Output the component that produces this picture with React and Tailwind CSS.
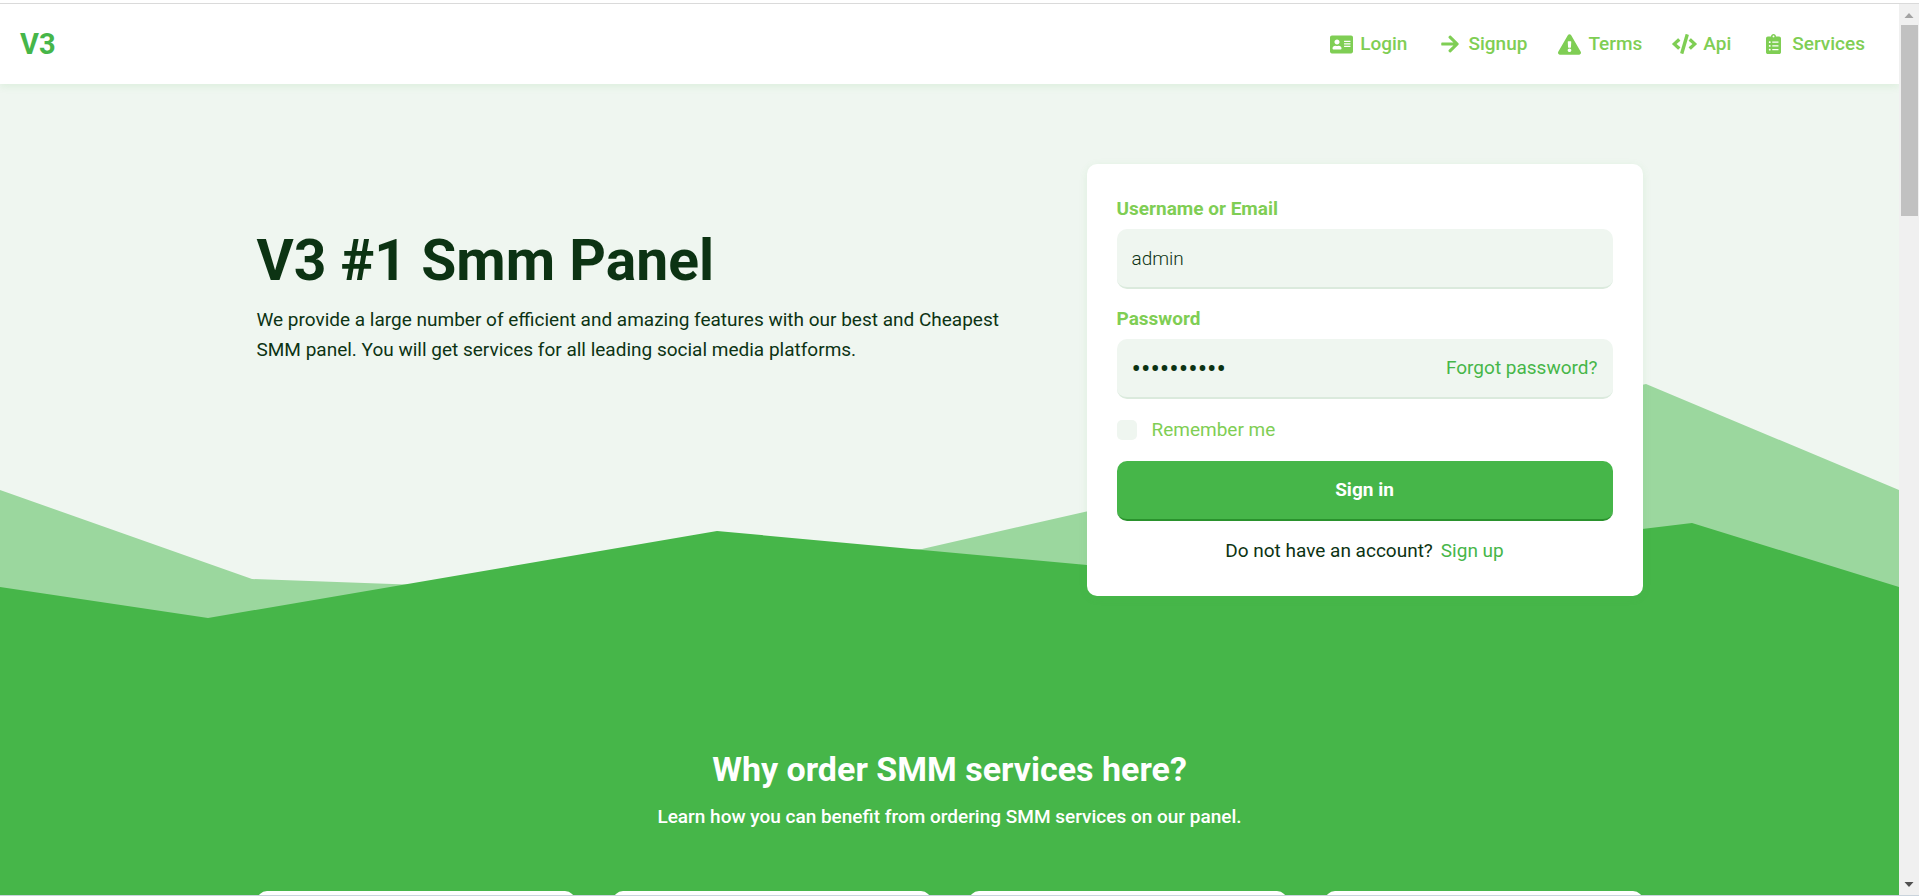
import React from 'react';
import {
  FaAddressCard,
  FaArrowRight,
  FaExclamationTriangle,
  FaCode,
  FaClipboardList,
} from 'react-icons/fa';

const links = [
  { label: 'Login', Icon: FaAddressCard, size: 'h-[21px] w-[23px]' },
  { label: 'Signup', Icon: FaArrowRight, size: 'h-5 w-[18px]' },
  { label: 'Terms', Icon: FaExclamationTriangle, size: 'h-[21px] w-[23px]' },
  { label: 'Api', Icon: FaCode, size: 'h-5 w-[25px]' },
  { label: 'Services', Icon: FaClipboardList, size: 'h-5 w-[15px]' },
];

function Header() {
  return (
    <header className="relative z-10 flex h-20 shrink-0 items-center justify-between bg-white pr-[34px] pl-5 shadow-[0_2px_8px_rgba(70,182,73,0.12)]">
      <a href="#home" className="text-[29px] leading-10 font-bold text-[#46b649]">
        V3
      </a>
      <nav className="flex items-center gap-[30px]">
        {links.map(({ label, Icon, size }) => (
          <a
            key={label}
            href={'#' + label.toLowerCase()}
            className="flex items-center gap-[6px] text-[19px] leading-[30px] font-medium text-[#7fce54]"
          >
            <span className="flex w-[25px] justify-center">
              <Icon className={size} aria-hidden="true" />
            </span>
            {label}
          </a>
        ))}
      </nav>
    </header>
  );
}

function Hills() {
  return (
    <svg
      className="absolute inset-0 h-full w-full"
      viewBox="0 0 1899 811"
      preserveAspectRatio="none"
      aria-hidden="true"
    >
      <path d="M0 406 252 495 406 500.500 922 465 1646 300 1899 406V811H0Z" fill="#9bd79e" />
      <path d="M0 503 208 534 717 447 1087 481 1350 480 1692 439 1899 503V811H0Z" fill="#46b649" />
    </svg>
  );
}

function LoginCard() {
  return (
    <form
      className="flex w-[556px] flex-col gap-[15px] rounded-[10px] bg-white p-[30px] shadow-[0_2px_8px_rgba(70,182,73,0.10)]"
      onSubmit={(e) => e.preventDefault()}
    >
      <div className="flex flex-col gap-[5px]">
        <label htmlFor="username" className="text-[19px] leading-[30px] font-bold text-[#7fce54]">
          Username or Email
        </label>
        <input
          id="username"
          type="text"
          defaultValue="admin"
          className="h-[60px] w-full rounded-[10px] border-b-2 border-[#dbeadd] bg-[#eff6f0] px-[15px] text-[19px] font-light text-[#0c3313] outline-none"
        />
      </div>
      <div className="flex flex-col gap-[5px]">
        <label htmlFor="password" className="text-[19px] leading-[30px] font-bold text-[#7fce54]">
          Password
        </label>
        <div className="flex h-[60px] items-center rounded-[10px] border-b-2 border-[#dbeadd] bg-[#eff6f0] px-[15px]">
          <input
            id="password"
            type="password"
            defaultValue="adminadmin"
            className="h-full min-w-0 flex-1 bg-transparent text-[28px] text-[#0c3313] outline-none"
          />
          <a href="#forgot" className="text-[19px] leading-[30px] text-[#46b649]">
            Forgot password?
          </a>
        </div>
      </div>
      <div className="flex items-center gap-[15px]">
        <input
          id="remember"
          type="checkbox"
          className="size-5 appearance-none rounded-[5px] bg-[#eff6f0] checked:bg-[#46b649]"
        />
        <label htmlFor="remember" className="text-[19px] leading-8 text-[#7fce54]">
          Remember me
        </label>
      </div>
      <button
        type="submit"
        className="h-[60px] rounded-[10px] border-b-2 border-[#2a922d] bg-[#46b649] text-[19px] font-bold text-white"
      >
        Sign in
      </button>
      <p className="flex justify-center gap-2 text-[19px] leading-[30px] text-[#0c3313]">
        Do not have an account?
        <a href="#signup" className="text-[#46b649]">
          Sign up
        </a>
      </p>
    </form>
  );
}

function Scrollbar() {
  return (
    <div className="flex w-5 shrink-0 flex-col items-center bg-[#f0f0f0]" aria-hidden="true">
      <svg className="h-[21px] w-5 shrink-0" viewBox="0 0 20 21">
        <path d="M5.500 14h9L10 9Z" fill="#a3a3a3" />
      </svg>
      <div className="h-[191px] w-[17px] shrink-0 bg-[#c1c1c1]" />
      <div className="flex-1" />
      <svg className="h-5 w-5 shrink-0" viewBox="0 0 20 20">
        <path d="M5.500 7h9L10 12Z" fill="#505050" />
      </svg>
    </div>
  );
}

export default function App() {
  return (
    <div className="flex h-screen flex-col overflow-hidden bg-white font-[Roboto,'Noto_Sans',sans-serif]">
      <div className="h-1 shrink-0 border-b border-[#dadada]" />
      <div className="flex min-h-0 flex-1">
        <div className="flex min-w-0 flex-1 flex-col overflow-hidden">
          <Header />
          <main className="relative min-h-0 flex-1 overflow-hidden bg-[#eff6f0]">
            <Hills />
            <div className="relative mx-auto flex max-w-[1386px] flex-col pt-20">
              <section className="flex items-start justify-between gap-[30px]">
                <div className="w-[756px] pt-[60px] text-[#0c3313]">
                  <h1 className="text-[57px] leading-[74px] font-bold">V3 #1 Smm Panel</h1>
                  <p className="mt-[7px] text-[19px] leading-[30px]">
                    We provide a large number of efficient and amazing features with our best and
                    Cheapest SMM panel. You will get services for all leading social media
                    platforms.
                  </p>
                </div>
                <LoginCard />
              </section>
              <section className="mt-[150px] flex flex-col text-center text-white">
                <h2 className="text-[34px] leading-[46px] font-bold">Why order SMM services here?</h2>
                <p className="mt-[10px] text-[19px] leading-[30px] font-medium">
                  Learn how you can benefit from ordering SMM services on our panel.
                </p>
                <div className="mt-[59px] grid grid-cols-4 gap-[38px]">
                  <div className="h-40 rounded-[10px] bg-white" />
                  <div className="h-40 rounded-[10px] bg-white" />
                  <div className="h-40 rounded-[10px] bg-white" />
                  <div className="h-40 rounded-[10px] bg-white" />
                </div>
              </section>
            </div>
          </main>
        </div>
        <Scrollbar />
      </div>
      <div className="h-px shrink-0 bg-[#c9d3dc]" />
    </div>
  );
}
